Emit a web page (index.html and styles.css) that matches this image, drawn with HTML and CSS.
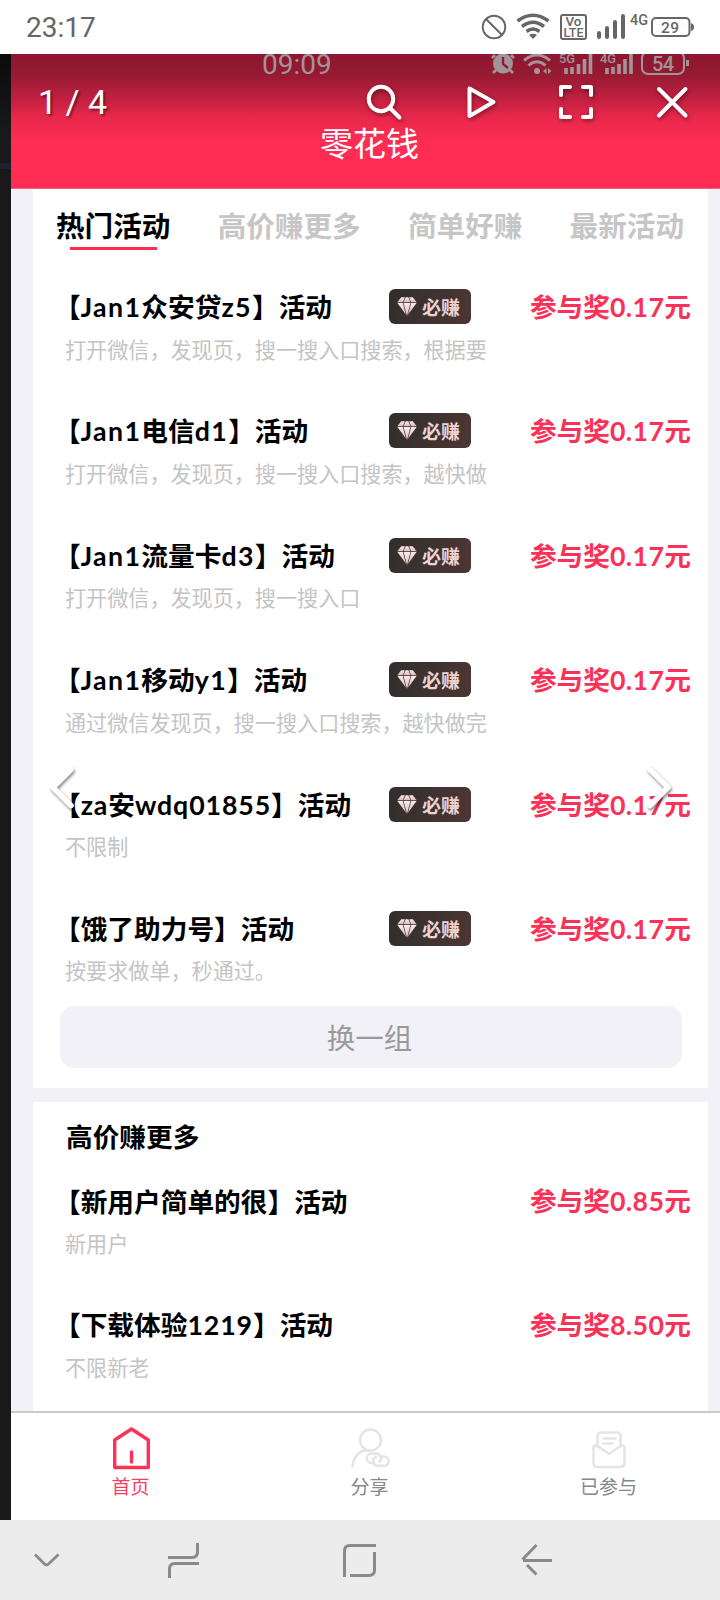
FILE: index.html
```html
<!DOCTYPE html>
<html lang="zh-CN">
<head>
<meta charset="utf-8">
<title>零花钱</title>
<link rel="stylesheet" href="styles.css">
</head>
<body>
<svg width="0" height="0" class="defs">
  <defs>
    <linearGradient id="rose" x1="0" y1="0" x2="0" y2="1"><stop offset="0" stop-color="#f6ecec"/><stop offset="1" stop-color="#dfb9b8"/></linearGradient>
    <symbol id="gem" viewBox="0 0 20 19">
      <g fill="url(#rose)">
        <path d="M4.200.3h3.700L5.800 5.200H.3Z"/><path d="M8.700.3h2.600l2.300 4.900H6.400Z"/><path d="M12.100.3h3.700l3.900 4.900h-5.500Z"/>
        <path d="M.4 6h5.400l3.200 11.800Z"/><path d="M6.500 6h7L10 19Z"/><path d="M14.200 6h5.400L11 17.800Z"/>
      </g>
    </symbol>
  </defs>
</svg>

<div class="screen">
  <header class="status">
    <span class="clock">23:17</span>
    <svg class="status-icons" width="240" height="54" viewBox="470 0 240 54" fill="none" stroke="#666">
      <circle cx="494" cy="27" r="11.300" stroke-width="1.900"/><path d="M486 19l16 16" stroke-width="1.900"/>
      <g stroke-width="3.500"><path d="M517.500 21q15.500-11.500 31 0"/><path d="M522 26.500q11-8.500 22 0"/><path d="M526.500 31.500q6.500-5 13 0"/></g>
      <path d="M529 35q4-2.500 8 0l-4 4Z" fill="#666" stroke="none"/>
      <rect x="561" y="15" width="25" height="24" rx="2" stroke-width="2"/>
      <g fill="#666" stroke="none" class="glyphs">
        <text x="565.500" y="26" font-size="13" textLength="16" lengthAdjust="spacingAndGlyphs">Vo</text><text x="563.500" y="37" font-size="13" textLength="20" lengthAdjust="spacingAndGlyphs">LTE</text>
        <text x="630" y="25" font-size="15.500" textLength="18" lengthAdjust="spacingAndGlyphs">4G</text><text x="661" y="33" font-size="15.500" textLength="18">29</text>
      </g>
      <path d="M599 33v4M607 28v9M615 22v15M623 16v21" stroke-width="4" stroke-linecap="round"/>
      <rect x="652" y="18" width="37.500" height="18" rx="4" stroke-width="2"/><path d="M691 23q3 1 3 4t-3 4Z" fill="#666" stroke="none"/>
    </svg>
  </header>

  <main class="viewer">
    <div class="edge"><i></i></div>
    <div class="photo">
      <div class="hero">
        <div class="inner-status">
          <span>09:09</span>
          <svg width="220" height="26" viewBox="484 54 220 26" fill="none" stroke="#a3949a">
            <circle cx="503" cy="63.500" r="10" fill="#a3949a" stroke="none"/><path d="M503 57v7l5 4" stroke="#951a31" stroke-width="2.400"/>
            <path d="M492 58l3-3M514 58l-3-3M496 70l-3 3M510 70l3 3" stroke-width="2.800"/>
            <g stroke-width="3"><path d="M524 60.500q13-11 26 0"/><path d="M528.500 65.500q8.500-7.500 17 0"/></g><circle cx="537" cy="71" r="3" fill="#a3949a" stroke="none"/><path d="M543 71l3.500-3v6ZM551.500 71l-3.500-3v6Z" fill="#a3949a" stroke="none"/>
            <g fill="#a3949a" stroke="none" class="glyphs"><text x="559" y="63" font-size="13.500" textLength="16" lengthAdjust="spacingAndGlyphs">5G</text><text x="600" y="63" font-size="13.500" textLength="16" lengthAdjust="spacingAndGlyphs">4G</text><text x="652" y="71" font-size="20" textLength="22">54</text></g>
            <path d="M566 68v6M572 67v7M578.500 64v10M584.500 59v15M590.500 54v20M607 68v6M613 67v7M619 64v10M625 59v15M631 54v20" stroke-width="3.600"/>
            <rect x="642" y="52" width="42" height="22" rx="6" stroke-width="2"/><path d="M687.500 60v6" stroke-width="3"/>
          </svg>
        </div>
        <div class="toolbar">
          <span class="count">1 / 4</span>
          <svg class="tools" width="340" height="50" viewBox="360 77 340 50" fill="none" stroke="#fff" stroke-width="4">
            <circle cx="381" cy="99" r="12.200"/><path d="M389.500 107.500L399.500 117.500" stroke-linecap="round"/>
            <path d="M469.500 88.500v27.500L493.500 102Z" stroke-linejoin="round"/>
            <path d="M561 95v-8h9M583 87h8v8M561 109v8h9M583 117h8v-8" stroke-linecap="round" stroke-linejoin="round"/>
            <path d="M659 89l26.500 26.500M685.500 89L659 115.500" stroke-linecap="round"/>
          </svg>
        </div>
        <h1>零花钱</h1>
      </div>

      <div class="feed">
        <section class="card hot">
          <nav class="tabs"><a class="on">热门活动</a><a>高价赚更多</a><a>简单好赚</a><a>最新活动</a></nav>
          <article class="row"><div class="line"><h2>【<b>Jan1</b>众安贷<b>z5</b>】活动</h2><span class="badge"><svg width="20" height="19"><use href="#gem"/></svg>必赚</span><strong>参与奖<b>0.17</b>元</strong></div><p>打开微信，发现页，搜一搜入口搜索，根据要</p></article>
          <article class="row"><div class="line"><h2>【<b>Jan1</b>电信<b>d1</b>】活动</h2><span class="badge"><svg width="20" height="19"><use href="#gem"/></svg>必赚</span><strong>参与奖<b>0.17</b>元</strong></div><p>打开微信，发现页，搜一搜入口搜索，越快做</p></article>
          <article class="row"><div class="line"><h2>【<b>Jan1</b>流量卡<b>d3</b>】活动</h2><span class="badge"><svg width="20" height="19"><use href="#gem"/></svg>必赚</span><strong>参与奖<b>0.17</b>元</strong></div><p>打开微信，发现页，搜一搜入口</p></article>
          <article class="row"><div class="line"><h2>【<b>Jan1</b>移动<b>y1</b>】活动</h2><span class="badge"><svg width="20" height="19"><use href="#gem"/></svg>必赚</span><strong>参与奖<b>0.17</b>元</strong></div><p>通过微信发现页，搜一搜入口搜索，越快做完</p></article>
          <article class="row"><div class="line"><h2 class="snug">【<b>za</b>安<b>wdq01855</b>】活动</h2><span class="badge"><svg width="20" height="19"><use href="#gem"/></svg>必赚</span><strong>参与奖<b>0.17</b>元</strong></div><p>不限制</p></article>
          <article class="row"><div class="line"><h2>【饿了助力号】活动</h2><span class="badge"><svg width="20" height="19"><use href="#gem"/></svg>必赚</span><strong>参与奖<b>0.17</b>元</strong></div><p>按要求做单，秒通过。</p></article>
          <button class="more">换一组</button>
        </section>
        <section class="card high">
          <h3>高价赚更多</h3>
          <article class="row"><div class="line"><h2>【新用户简单的很】活动</h2><strong>参与奖<b>0.85</b>元</strong></div><p>新用户</p></article>
          <article class="row"><div class="line"><h2 class="snug">【下载体验<b>1219</b>】活动</h2><strong>参与奖<b>8.50</b>元</strong></div><p>不限新老</p></article>
        </section>
      </div>

      <nav class="tabbar">
        <a class="on"><svg width="50" height="50" viewBox="105 1420 50 50" fill="none" stroke="#ff3156" stroke-width="3.400" stroke-linejoin="round" stroke-linecap="round"><path d="M113.700 1439L130.500 1428L147.300 1439V1466.500H113.700Z"/><path d="M130.500 1451v10"/></svg><span>首页</span></a>
        <a><svg width="50" height="50" viewBox="344 1420 50 50" fill="none" stroke="#e5e5e5" stroke-width="2.600" stroke-linecap="round"><circle cx="369.500" cy="1439" r="10.500"/><path d="M351.500 1465.500q1-12 11-16h7"/><path d="M373 1462h-2.500a4.700 4.700 0 0 1 0-9.400h5a4.700 4.700 0 0 1 3 8.200M379 1455.500h4a4.700 4.700 0 0 1 0 9.400h-6a4.700 4.700 0 0 1-2-9"/></svg><span>分享</span></a>
        <a><svg width="50" height="50" viewBox="583 1420 50 50" fill="none" stroke="#e5e5e5" stroke-width="2.600" stroke-linecap="round" stroke-linejoin="round"><path d="M596.500 1446V1435q0-3.500 3.500-3.500h16q3.500 0 3.500 3.500V1446M602.500 1437.500h12M602.500 1442.500h9"/><path d="M596 1444.500q-3.500-1-3.500 2.500v15q0 4 4 4h23q4 0 4-4v-15q0-3.500-3.500-2.500L608 1453Z"/></svg><span>已参与</span></a>
      </nav>
      <svg class="arrow prev" width="40" height="56" viewBox="0 0 40 56"><path d="M26 10.500L8 28.500L26 46.500"/></svg>
      <svg class="arrow next" width="40" height="56" viewBox="0 0 40 56"><path d="M11 10.500L29 28.500L11 46.500"/></svg>
    </div>
  </main>

  <footer class="sysnav">
    <svg width="720" height="80" viewBox="0 1520 720 80" fill="none" stroke="#8a8a8a" stroke-width="3">
      <path d="M35 1554.500l9.500 9.500q2 2 4 0L58.500 1554.500" stroke-width="2.800"/>
      <path d="M168 1557.500h24q5.500 0 5.500-5.500v-9M199 1563.500h-24q-5.500 0-5.500 5.500v9"/>
      <path d="M344.500 1577v-26q0-5.500 5.500-5.500h26M374.500 1552v18q0 5.500-5.500 5.500h-19"/>
      <path d="M552 1560.500h-29M536.500 1545l-14 14.500M527 1565l9.500 9.500"/>
    </svg>
  </footer>
</div>
</body>
</html>
```

FILE: styles.css
```css
* { box-sizing: border-box; margin: 0; padding: 0; }
body { width: 720px; font-family: "Noto Sans CJK SC", sans-serif; }
.defs { position: absolute; }
svg { display: block; flex: none; }
.screen { display: flex; flex-direction: column; width: 720px; height: 1600px; overflow: hidden; }
.status { display: flex; justify-content: space-between; align-items: center; height: 54px; padding: 0 10px 0 26px; background: #fff; }
.clock { font: 28px/54px Roboto, sans-serif; color: #666; padding-top: 2px; }
.glyphs { font-family: Roboto, sans-serif; font-weight: 500; }
.viewer { display: flex; height: 1466px; }
.edge { width: 11px; background: linear-gradient(#0b0b0c, #19191b 80px); padding-top: 109px; }
.edge i { display: block; height: 6px; background: #1b232e; }
.photo { position: relative; display: flex; flex-direction: column; width: 709px; height: 1466px; background: #f2f1f7; }
.hero { height: 135px; flex: none; background: linear-gradient(#8c172f 0, #951a32 20px, #bf2040 44px, #e9284b 64px, #ff2d54 90px); border-bottom: 1px solid #f0617c; color: #fff; }
.inner-status { display: flex; justify-content: space-between; height: 23px; padding: 0 16px 0 251px; }
.inner-status span { font: 28px/22px Roboto, sans-serif; color: #a3949a; }
.toolbar { display: flex; justify-content: space-between; height: 50px; padding: 0 20px 0 27px; }
.count { font: 34px/50px Roboto, sans-serif; text-shadow: 2px 2px 2px #0006; }
.tools { filter: drop-shadow(1px 2px 2px #0006); }
h1 { font-size: 33px; line-height: 31px; font-weight: 400; text-align: center; padding-left: 8px; }
.feed { flex: 1; min-height: 0; padding: 0 12px 0 22px; overflow: hidden; }
.card { background: #fff; }
.hot { height: 899px; }
.tabs { display: flex; justify-content: space-between; height: 87px; padding: 14px 24px 0 23px; font-size: 28.600px; line-height: 44px; font-weight: 700; color: #c6c6c6; }
.tabs a { height: 48px; }
.tabs .on { color: #000; background: linear-gradient(#ff2d54, #ff2d54) 14px 44px / 87px 3px no-repeat; }
.row { height: 124.400px; padding: 12px 17px 0 33px; }
.line { display: flex; align-items: center; height: 37px; }
h2, strong, h3 { font-size: 26.700px; line-height: 36px; font-weight: 700; white-space: nowrap; }
h2 { width: 334px; margin-left: -12px; color: #000; }
h2 b { letter-spacing: 1.400px; }
h2.snug b { letter-spacing: .9px; }
strong b { letter-spacing: .4px; }
h2 b, strong b { font-family: Lato, sans-serif; font-weight: 700; }
strong { margin-left: auto; color: #fb3157; }
.badge { display: flex; align-items: center; gap: 5px; width: 82px; height: 35px; margin-left: 1px; padding-left: 8px; border-radius: 6px; background: linear-gradient(100deg, #312e2d, #4c3633); color: #ecd2d1; font-size: 19px; font-weight: 700; }
.row p { font-size: 21.100px; line-height: 28px; margin: 9.500px 0 0 -1px; color: #c4c4c4; white-space: nowrap; }
.more { display: block; width: 622px; height: 62px; margin: -16px 0 0 27px; padding-right: 3px; border: 0; border-radius: 14px; background: #f2f1f7; color: #999; font: 28.500px/58px "Noto Sans CJK SC", sans-serif; }
.high { height: 330px; margin-top: 14px; padding-top: 16px; }
h3 { padding-left: 33px; height: 52px; }
.tabbar { display: grid; grid-template-columns: 239px 239px 231px; flex: none; height: 109px; border-top: 2px solid #c9c8cb; background: #fff; }
.tabbar a { display: flex; flex-direction: column; align-items: center; gap: 4px; padding-top: 8px; font-size: 19px; line-height: 22px; color: #85878b; }
.tabbar a:last-child { padding-left: 8px; }
.tabbar .on { color: #f93e61; }
.arrow { position: absolute; top: 705px; fill: none; stroke: #fff; stroke-width: 5.500; stroke-linecap: round; stroke-linejoin: round; filter: drop-shadow(1px 2px 1.500px #0007); }
.prev { left: 34px; }
.next { left: 628px; }
.sysnav { height: 80px; background: #ececec; }
```
